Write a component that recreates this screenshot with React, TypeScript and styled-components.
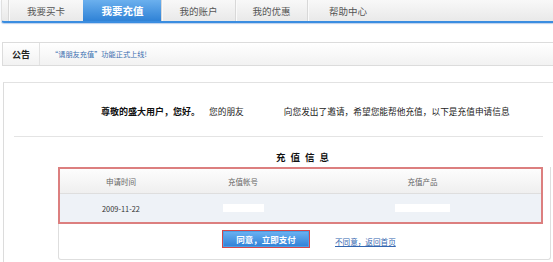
import React from "react";
import styled, { createGlobalStyle } from "styled-components";

const Global = createGlobalStyle`
  html, body { margin: 0; padding: 0; background: #fff; }
  body { font-family: "Noto Sans CJK SC", "Noto Sans", sans-serif; color: #333; }
`;

const Page = styled.div`
  width: 553px;
  height: 262px;
  overflow: hidden;
  display: flex;
  flex-direction: column;
`;

const NavBar = styled.div`
  height: 21px;
  display: flex;
  padding-left: 6px;
  margin-left: 1px;
  background: linear-gradient(#f8f8f8, #e9e9e9);
  border-left: 1px solid #e0e0e0;
  border-bottom: 2px solid #3a8de0;
  border-bottom-left-radius: 3px;
  box-shadow: 0 1px 1px rgba(60, 120, 200, 0.35);
`;

const Tab = styled.div<{ $w: number; $active?: boolean }>`
  width: ${(p) => p.$w}px;
  display: flex;
  align-items: center;
  justify-content: center;
  font-size: ${(p) => (p.$active ? 10.5 : 9.5)}px;
  font-weight: ${(p) => (p.$active ? 700 : 400)};
  color: ${(p) => (p.$active ? "#fff" : "#555")};
  background: ${(p) =>
    p.$active ? "linear-gradient(#6bb0ee, #2f82d6)" : "transparent"};
  border-left: 1px solid ${(p) => (p.$active ? "transparent" : "#d8d8d8")};
  box-shadow: ${(p) => (p.$active ? "none" : "inset 1px 0 0 #fafafa")};
`;

const Notice = styled.div`
  margin: 19px 0 0 2px;
  height: 22px;
  display: flex;
  align-items: center;
  border: 1px solid #dcdcdc;
  border-right: none;
  background: linear-gradient(#ffffff, #f2f2f2);
`;

const NoticeLabel = styled.div`
  width: 36px;
  height: 100%;
  display: flex;
  align-items: center;
  justify-content: center;
  font-size: 9px;
  font-weight: 700;
  color: #222;
  border-right: 1px solid #e2e2e2;
`;

const NoticeText = styled.div`
  padding-left: 11px;
  font-size: 7.2px;
  color: #3a6fb0;
`;

const Panel = styled.div`
  flex: 1;
  margin: 16px 0 0 3px;
  border-left: 1px solid #dcdcdc;
  border-top: 1px solid #e2e2e2;
  display: flex;
  flex-direction: column;
`;

const Greeting = styled.div`
  height: 54px;
  margin: 0 10px 0 10px;
  border-bottom: 1px solid #e4e4e4;
  display: flex;
  align-items: center;
  padding: 4px 0 0 87px;
  box-sizing: border-box;
  font-size: 8.7px;
  color: #222;
`;

const Strong = styled.span`
  font-weight: 700;
  font-size: 9px;
  color: #111;
`;

const Friend = styled.span`
  margin-left: 9px;
  margin-right: 40px;
`;

const Title = styled.div`
  margin: 13px 0 0 272px;
  font-size: 9.5px;
  font-weight: 700;
  letter-spacing: 5px;
  color: #111;
`;

const Box = styled.div`
  margin: 3px 0 0 54px;
  width: 491px;
  height: 92px;
  border: 1px solid #dedede;
  border-top: none;
  border-radius: 0 0 3px 3px;
  display: flex;
  flex-direction: column;
`;

const Table = styled.div`
  width: 485px;
  border: 2px solid #dc7f7f;
  margin-left: -1px;
  box-sizing: border-box;
  display: grid;
  grid-template-columns: 122px 122px 1fr;
`;

const HeadCell = styled.div`
  height: 24px;
  display: flex;
  align-items: center;
  justify-content: center;
  font-size: 7.5px;
  color: #666;
  background: linear-gradient(#fdfdfd, #efefef);
  border-bottom: 1px solid #dedede;
`;

const Cell = styled.div`
  height: 28px;
  display: flex;
  align-items: center;
  justify-content: center;
  font-size: 7.4px;
  color: #333;
  background: #eef2f7;
`;

const Blank = styled.span<{ $w: number }>`
  display: block;
  width: ${(p) => p.$w}px;
  height: 8px;
  background: #fff;
`;

const Actions = styled.div`
  flex: 1;
  display: flex;
  align-items: center;
  padding: 0 0 6px 163px;
`;

const Button = styled.button`
  width: 88px;
  height: 18px;
  padding: 0;
  border: 1px solid #d4474a;
  background: linear-gradient(#6cb3f2, #2f80d6);
  box-shadow: inset 0 0 0 1px #4d9de6;
  color: #fff;
  font-family: inherit;
  font-size: 8.5px;
  font-weight: 700;
  display: flex;
  align-items: center;
  justify-content: center;
`;

const Link = styled.a`
  margin: 5px 0 0 25px;
  font-size: 7.6px;
  color: #3366b0;
  text-decoration: underline;
`;

export default function App() {
  return (
    <Page>
      <Global />
      <NavBar>
        <Tab $w={74}>我要买卡</Tab>
        <Tab $w={77} $active>
          我要充值
        </Tab>
        <Tab $w={73}>我的账户</Tab>
        <Tab $w={71}>我的优惠</Tab>
        <Tab $w={80}>帮助中心</Tab>
      </NavBar>
      <Notice>
        <NoticeLabel>公告</NoticeLabel>
        <NoticeText>“请朋友充值”功能正式上线!</NoticeText>
      </Notice>
      <Panel>
        <Greeting>
          <Strong>尊敬的盛大用户，您好。</Strong>
          <Friend>您的朋友</Friend>
          <span>向您发出了邀请，希望您能帮他充值，以下是充值申请信息</span>
        </Greeting>
        <Title>充值信息</Title>
        <Box>
          <Table>
            <HeadCell>申请时间</HeadCell>
            <HeadCell>充值帐号</HeadCell>
            <HeadCell>充值产品</HeadCell>
            <Cell>2009-11-22</Cell>
            <Cell>
              <Blank $w={41} />
            </Cell>
            <Cell>
              <Blank $w={55} />
            </Cell>
          </Table>
          <Actions>
            <Button>同意，立即支付</Button>
            <Link>不同意，返回首页</Link>
          </Actions>
        </Box>
      </Panel>
    </Page>
  );
}
